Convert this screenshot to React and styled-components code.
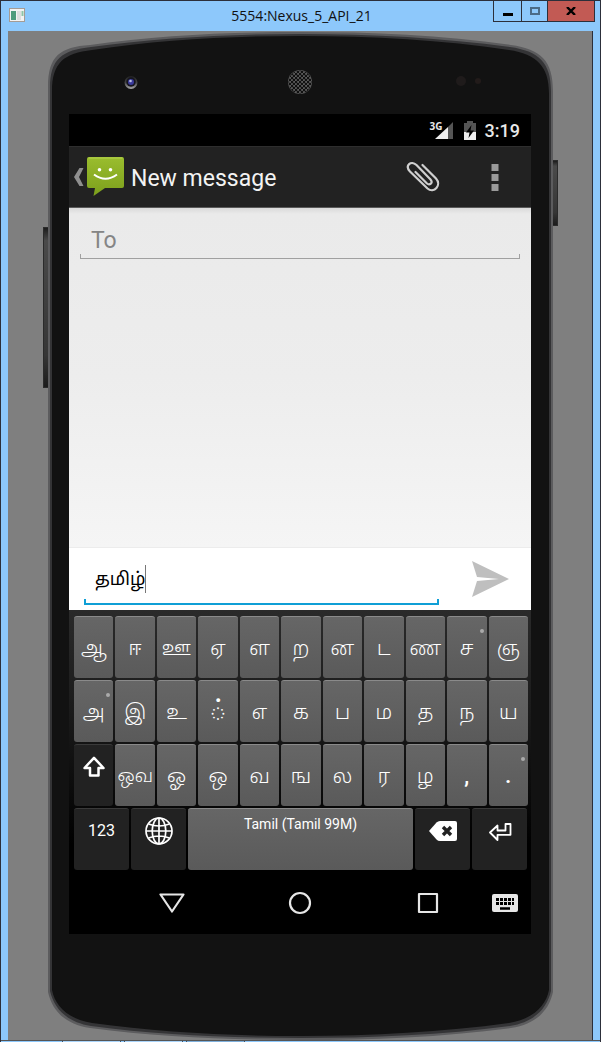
import React from 'react';
import styled, { createGlobalStyle, css } from 'styled-components';

const Global = createGlobalStyle`
  *, *::before, *::after { box-sizing: border-box; }
  html, body { margin: 0; padding: 0; background: #8dc8fb; }
  button { border: 0; padding: 0; margin: 0; background: none; color: inherit; font: inherit; }
  svg { display: block; }
`;

const ui = `Roboto, "Noto Sans", "Noto Sans Tamil", sans-serif`;

const Window = styled.div`
  background: #8dc8fb;
  border: 1px solid #2c2f3a;
  border-bottom: 0;
  font-family: ${ui};
`;

const TitleBar = styled.header`
  display: grid;
  grid-template-columns: 102px 1fr 102px;
  height: 30px;
  padding: 0 6px 0 8px;
`;

const AppIcon = styled.span`
  margin-top: 7px;
`;

const Title = styled.h1`
  margin: 0;
  text-align: center;
  font: 400 14px/30px "Open Sans", "Noto Sans", sans-serif;
  color: #111;
`;

const WindowButtons = styled.div`
  display: flex;
  justify-content: flex-end;
  margin-right: -1px;
  height: 21px;
`;

const WindowButton = styled.button`
  display: grid;
  place-items: center;
  width: ${(p) => (p.$close ? 47 : p.$first ? 29 : 26)}px;
  border: solid #2c2f3a;
  border-width: 0 1px 1px ${(p) => (p.$first ? 1 : 0)}px;
  background: ${(p) => (p.$close ? '#c25a54' : 'transparent')};
`;

const Desk = styled.main`
  margin: 0 7px;
  padding: 0 39px 0 40px;
  background: #7f7f7f;
  border-right: 1px solid #2c2f3a;
`;

const Phone = styled.section`
  position: relative;
  isolation: isolate;
  display: flex;
  flex-direction: column;
  padding: 0 22px 106px 21px;
`;

const Body = styled.svg`
  position: absolute;
  inset: 0;
  width: 100%;
  height: 100%;
  z-index: -1;
`;

const SideButton = styled.span`
  position: absolute;
  z-index: -2;
  top: ${(p) => p.$top}px;
  ${(p) => p.$side}: -5px;
  width: 8px;
  height: ${(p) => p.$height}px;
  background: linear-gradient(#1c1c1c, #4a4a4a 8%, #363636 80%, #1c1c1c);
  border: 1px solid #2b2b2b;
`;

const Bezel = styled.div`
  display: grid;
  grid-template-columns: 1fr 26px 1fr;
  align-items: center;
  height: 83px;
  padding: 19px 48px 0;

  & > :first-child { margin-left: 7px; }
`;

const Sensors = styled.span`
  justify-self: end;
`;

const Screen = styled.div`
  background: #000;
`;

const StatusBar = styled.div`
  display: flex;
  justify-content: flex-end;
  align-items: center;
  height: 32px;
  padding: 1px 11px 0;
  color: #e8e8e8;
  font-size: 18px;
  font-weight: 500;
`;

const Network = styled.span`
  display: flex;
  margin-right: 11px;
  height: 17px;
  font: 700 10px/8px "Open Sans", sans-serif;

  svg { margin-left: -8px; }
`;

const Battery = styled.span`
  margin-right: 9px;
`;

const ActionBar = styled.div`
  display: flex;
  align-items: center;
  height: 62px;
  padding: 0 32px 0 5px;
  background: #222;
  border-top: 1px solid #2e2e2e;
  border-bottom: 1px solid #5a5a5a;
  color: #f3f3f3;
`;

const Back = styled.button`
  display: flex;
  align-items: center;
  gap: 2px;
`;

const ScreenTitle = styled.h2`
  flex: 1;
  margin: 0 0 0 7px;
  padding-top: 3px;
  font-size: 23px;
  font-weight: 400;
  line-height: 30px;
`;

const BarButton = styled.button`
  margin-left: ${(p) => (p.$wide ? 50 : 0)}px;
`;

const Conversation = styled.div`
  height: 340px;
  padding: 14px 11px 0;
  background: linear-gradient(#dadada, #eaeaea 6px, #ededed 50%, #f5f5f5);
  border-bottom: 1px solid #ececec;
`;

const Underlined = styled.div`
  position: relative;
  display: flex;
  align-items: center;
  height: ${(p) => p.$height}px;
  padding: 2px 11px 0;
  border-bottom: ${(p) => p.$line}px solid ${(p) => p.$color};

  &::after {
    content: '';
    position: absolute;
    inset: auto 0 0;
    height: 4px;
    border: solid ${(p) => p.$color};
    border-width: 0 ${(p) => p.$line}px;
  }
`;

const plainInput = css`
  min-width: 0;
  padding: 0;
  border: 0;
  outline: 0;
  background: transparent;
  font-family: ${ui};
`;

const ToInput = styled.input`
  ${plainInput}
  flex: 1;
  font-size: 23px;
  line-height: 30px;
  &::placeholder { color: #858585; opacity: 1; }
`;

const Compose = styled.form`
  display: flex;
  align-items: center;
  height: 62px;
  padding: 0 22px 0 15px;
  background: #fff;
`;

const MessageField = styled.div`
  flex: 1;
  margin-right: 33px;
`;

const MessageInput = styled.input`
  ${plainInput}
  field-sizing: content;
  font-size: 18px;
  line-height: 30px;
  color: #000;
`;

const Caret = styled.span`
  width: 1px;
  height: 28px;
  background: #777;
`;

const Keyboard = styled.div`
  display: flex;
  flex-direction: column;
  gap: 2px;
  padding: 6px 3px 0 5px;
  background: linear-gradient(#2a2a2a, #1a1a1a 40%, #000 90%);
  color: #fff;
`;

const KeyRow = styled.div`
  display: grid;
  grid-template-columns: ${(p) => (p.$bottom ? '55px 55px 1fr 55px 55px' : 'repeat(11, 1fr)')};
  gap: 2px;
  padding-right: ${(p) => (p.$bottom ? 1 : 0)}px;
`;

const Key = styled.button`
  position: relative;
  display: flex;
  justify-content: center;
  align-items: ${(p) => (p.$raised ? 'flex-start' : 'center')};
  min-width: 0;
  height: 62px;
  padding-top: ${(p) => (p.$raised ? p.$raised : 0)}px;
  border-radius: 3px;
  border-top: 1px solid ${(p) => (p.$dark ? '#3a3a3a' : '#8a8a8a')};
  background: ${(p) => (p.$dark ? '#222' : 'linear-gradient(#666, #5a5a5a)')};
  font-size: ${(p) => (p.$size ? p.$size : 20)}px;
  line-height: 20px;
  font-weight: ${(p) => p.$weight || 300};
  white-space: nowrap;

  ${(p) => p.$more && css`
    &::after {
      content: '';
      position: absolute;
      top: 12px;
      right: 3px;
      width: 4px;
      height: 4px;
      border-radius: 2px;
      background: #aaa;
    }
  `}
`;

const NavBar = styled.nav`
  display: grid;
  grid-template-columns: 1fr 1fr 1fr 39px;
  place-items: center;
  height: 64px;
  padding: 2px 0 0 39px;

  & > :last-child { justify-self: start; }
`;

const Taskbar = styled.footer`
  display: flex;
  gap: 3px;
  height: 2px;
  padding-left: 61px;
  border-top: 1px solid #555;
`;

const Task = styled.span`
  width: 59px;
  background: ${(p) => (p.$active ? '#7fb0dc' : '#a9d4fa')};
  border: solid #3f5468;
  border-width: 0 1px;
`;

const rows = [
  ['ஆ', 'ஈ', 'ஊ', 'ஏ', 'ள', 'ற', 'ன', 'ட', 'ண', 'ச•', 'ஞ'],
  ['அ•', 'இ', 'உ', '்', 'எ', 'க', 'ப', 'ம', 'த', 'ந', 'ய'],
  ['shift', 'ஒவ', 'ஓ', 'ஒ', 'வ', 'ங', 'ல', 'ர', 'ழ', ',', '.•'],
];

const emphasis = {
  '்': { $size: 28, $weight: 400 },
  ',': { $weight: 700 },
  '.': { $weight: 700 },
  'ஒவ': { $size: 18 },
};

const PhoneBody = () => (
  <Body viewBox="0 0 504 1010" preserveAspectRatio="none" aria-hidden="true">
    <path d="M0 56C0 25 12 16 42 14C110 4 180 1 252 1S394 4 462 14C492 18 504 30 504 60V962C500 980 488 994 462 998C394 1007 324 1010 252 1010S110 1007 42 998C16 994 4 980 0 962Z" fill="#5c5c5e" />
    <path d="M2 57C2 28 14 19 43 16C110 7 180 3 252 3S394 7 461 16C490 20 502 32 502 60V961C498 978 486 992 461 996C394 1005 324 1008 252 1008S110 1005 43 996C18 992 6 978 2 961Z" fill="#343436" />
    <path d="M4 60C4 32 16 22 44 19C110 9 180 5 252 5S394 9 460 19C488 23 500 36 500 62V960C497 976 484 989 460 993C394 1002 324 1006 252 1006S110 1002 44 993C20 989 7 976 4 960Z" fill="#121212" />
  </Body>
);

const Speaker = () => (
  <svg width="26" height="26" viewBox="0 0 26 26" aria-hidden="true">
    <defs>
      <pattern id="mesh" width="4" height="4" patternUnits="userSpaceOnUse">
        <circle cx="1" cy="1" r="1.3" fill="#111" />
        <circle cx="3" cy="3" r="1.3" fill="#111" />
      </pattern>
    </defs>
    <circle cx="13" cy="13" r="12" fill="#5a5a5a" />
    <circle cx="13" cy="13" r="11.5" fill="url(#mesh)" />
  </svg>
);

const Camera = () => (
  <svg width="14" height="14" viewBox="0 0 14 14" aria-hidden="true">
    <defs>
      <linearGradient id="ring" x2="0" y2="1"><stop stopColor="#222" /><stop offset=".5" stopColor="#444" /><stop offset="1" stopColor="#aaa" /></linearGradient>
    </defs>
    <circle cx="7" cy="7.500" r="6.500" fill="url(#ring)" />
    <circle cx="7" cy="7" r="4.700" fill="#15151f" />
    <circle cx="7" cy="7" r="3" fill="#3a3a9c" />
    <circle cx="6.500" cy="6" r="1.300" fill="#b8bde0" />
  </svg>
);

const Messenger = () => (
  <svg width="38" height="40" viewBox="0 0 38 40" aria-hidden="true">
    <defs>
      <linearGradient id="bubble" x2="0" y2="1"><stop stopColor="#9abd2e" /><stop offset="1" stopColor="#7c9f1c" /></linearGradient>
    </defs>
    <path d="M3 0H36Q38 0 38 2V29Q38 31 36 31H19L7.500 39L9 31H3Q1 31 1 29V2Q1 0 3 0Z" fill="url(#bubble)" />
    <path d="M2.500 1H36.500" stroke="#b6d34f" />
    <circle cx="13.500" cy="12.700" r="1.800" fill="#fff" />
    <circle cx="24.500" cy="12.700" r="1.800" fill="#fff" />
    <path d="M8 17.500Q19.500 26 31 17.500" fill="none" stroke="#fff" strokeWidth="2" />
  </svg>
);

const Clip = () => (
  <svg width="36" height="34" viewBox="0 0 36 34" fill="none" stroke="#cfcfcf" strokeWidth="2.200" strokeLinecap="round" aria-hidden="true">
    <path d="M17.500 5L31 18.500C37 25 29 34 22.500 28.500L5 11.500C-.5 5.500 6 0 11.500 5L25.500 19.500C28.500 23 24.500 25.500 22 23.500L10.500 12" />
  </svg>
);

const Shift = () => (
  <svg width="24" height="22" viewBox="0 0 24 22" fill="none" stroke="#fff" strokeWidth="2.500" strokeLinejoin="round" aria-hidden="true">
    <path d="M12 1.800L21.500 12H16.500V19.500H8V12H2.500Z" />
  </svg>
);

const Globe = () => (
  <svg width="28" height="28" viewBox="0 0 28 28" fill="none" stroke="#fff" strokeWidth="1.700" aria-hidden="true">
    <circle cx="14" cy="14" r="13" />
    <ellipse cx="14" cy="14" rx="6.800" ry="13" />
    <path d="M14 1V27M1 14H27M3.500 7Q14 11 24.500 7M3.500 21Q14 17 24.500 21" />
  </svg>
);

const Backspace = () => (
  <svg width="28" height="20" viewBox="0 0 28 20" aria-hidden="true">
    <path d="M0 10L7.500 1.500Q9 0 11 0H26Q28 0 28 2V18Q28 20 26 20H11Q9 20 7.500 18.500Z" fill="#fff" />
    <path d="M14 6L22 14M22 6L14 14" stroke="#222" strokeWidth="3.400" />
  </svg>
);

const Enter = () => (
  <svg width="24" height="20" viewBox="0 0 24 20" fill="none" stroke="#fff" strokeWidth="1.800" strokeLinejoin="round" aria-hidden="true">
    <path d="M17.500 2H22.500V12.800H9.500V18L2 10.500L9.500 3.500V8.500H17.500Z" />
  </svg>
);

export default function App() {
  return (
    <>
      <Global />
      <Window>
        <TitleBar>
          <AppIcon>
            <svg width="16" height="14" viewBox="0 0 16 14" aria-hidden="true">
              <rect x=".5" y=".5" width="15" height="13" fill="#f3f3f3" stroke="#a59c94" />
              <rect x="2" y="3" width="5" height="9" fill="#4f9b7c" />
              <rect x="8" y="3" width="4" height="9" fill="#dedede" />
              <rect x="12.500" y="3" width="2" height="5" fill="#8fc5a8" />
            </svg>
          </AppIcon>
          <Title>5554:Nexus_5_API_21</Title>
          <WindowButtons>
            <WindowButton $first aria-label="Minimize">
              <svg width="10" height="10" aria-hidden="true"><path d="M0 8.500H10" stroke="#000" strokeWidth="3" /></svg>
            </WindowButton>
            <WindowButton aria-label="Maximize">
              <svg width="10" height="8" aria-hidden="true"><rect x="1" y="1" width="8" height="6" fill="none" stroke="#4b6b87" strokeWidth="2" /></svg>
            </WindowButton>
            <WindowButton $close aria-label="Close">
              <svg width="10" height="8" aria-hidden="true"><path d="M1 0L9 8M9 0L1 8" stroke="#000" strokeWidth="2.400" /></svg>
            </WindowButton>
          </WindowButtons>
        </TitleBar>

        <Desk>
          <Phone>
            <PhoneBody />
            <SideButton $side="left" $top={196} $height={161} />
            <SideButton $side="right" $top={129} $height={66} />
            <Bezel>
              <Camera />
              <Speaker />
              <Sensors>
                <svg width="28" height="12" aria-hidden="true">
                  <circle cx="6" cy="5" r="5" fill="#1f1b1b" />
                  <circle cx="23" cy="5" r="3" fill="#221b1a" />
                </svg>
              </Sensors>
            </Bezel>

            <Screen>
              <StatusBar>
                <Network>
                  3G
                  <svg width="18" height="17" viewBox="0 0 18 17" aria-hidden="true">
                    <path d="M18 0V17H13V5Z" fill="#555" />
                    <path d="M13 5V17H0Z" fill="#eee" />
                  </svg>
                </Network>
                <Battery>
                  <svg width="12" height="19" viewBox="0 0 12 19" aria-hidden="true">
                    <path d="M3 0H9V2H12V19H0V2H3Z" fill="#555" />
                    <path d="M0 11H12V19H0Z" fill="#eee" />
                    <path d="M7.500 4L2 11.500H5.500L4.500 17L10 9.500H6.500Z" fill="#000" />
                  </svg>
                </Battery>
                <time>3:19</time>
              </StatusBar>

              <ActionBar>
                <Back aria-label="Back">
                  <svg width="10" height="20" viewBox="0 0 10 20" aria-hidden="true">
                    <path d="M5.500 1H9.500L5 10L9.500 19H5.500L0 10Z" fill="#8f8f8f" />
                  </svg>
                  <Messenger />
                </Back>
                <ScreenTitle>New message</ScreenTitle>
                <BarButton aria-label="Attach"><Clip /></BarButton>
                <BarButton $wide aria-label="More options">
                  <svg width="8" height="27" aria-hidden="true">
                    <path d="M4 0V27" stroke="#9a9a9a" strokeWidth="7" strokeDasharray="7 3" />
                  </svg>
                </BarButton>
              </ActionBar>

              <Conversation>
                <Underlined $height={37} $line={1} $color="#a0a0a0">
                  <ToInput aria-label="To" placeholder="To" />
                </Underlined>
              </Conversation>

              <Compose onSubmit={(e) => e.preventDefault()}>
                <MessageField>
                  <Underlined $height={52} $line={2} $color="#0f9fd6">
                    <MessageInput aria-label="Message" defaultValue="தமிழ்" />
                    <Caret />
                  </Underlined>
                </MessageField>
                <button aria-label="Send">
                  <svg width="37" height="36" viewBox="0 0 37 36" aria-hidden="true">
                    <path d="M0 0L37 18L0 36L5 20L27 18L5 16Z" fill="#bfbfbf" />
                  </svg>
                </button>
              </Compose>

              <Keyboard>
                {rows.map((row) => (
                  <KeyRow key={row[0]}>
                    {row.map((k) => {
                      const label = k.replace('•', '');
                      return k === 'shift' ? (
                        <Key key={k} $dark $raised={11} aria-label="Shift"><Shift /></Key>
                      ) : (
                        <Key key={k} $more={k !== label} {...emphasis[label]}>{label}</Key>
                      );
                    })}
                  </KeyRow>
                ))}
                <KeyRow $bottom>
                  <Key $dark $raised={12} $size={16} $weight={400}>123</Key>
                  <Key $dark $raised={8} aria-label="Switch language"><Globe /></Key>
                  <Key $raised={5} $size={14} $weight={400}>Tamil (Tamil 99M)</Key>
                  <Key $dark $raised={12} aria-label="Delete"><Backspace /></Key>
                  <Key $dark $raised={13} aria-label="Enter"><Enter /></Key>
                </KeyRow>
              </Keyboard>

              <NavBar>
                <button aria-label="Back">
                  <svg width="26" height="20" viewBox="0 0 26 20" fill="none" stroke="#e6e6e6" strokeWidth="2.200" strokeLinejoin="round" aria-hidden="true"><path d="M1.500 1.500H24.500L13 18.500Z" /></svg>
                </button>
                <button aria-label="Home">
                  <svg width="24" height="24" fill="none" stroke="#e6e6e6" strokeWidth="2.200" aria-hidden="true"><circle cx="12" cy="12" r="10" /></svg>
                </button>
                <button aria-label="Overview">
                  <svg width="22" height="22" fill="none" stroke="#e6e6e6" strokeWidth="2.200" strokeLinejoin="round" aria-hidden="true"><rect x="2" y="2" width="18" height="18" /></svg>
                </button>
                <button aria-label="Choose keyboard">
                  <svg width="26" height="18" viewBox="0 0 26 18" aria-hidden="true">
                    <rect width="26" height="18" rx="2" fill="#e6e6e6" />
                    <path d="M4 5.500H22M4 9.500H22" stroke="#000" strokeWidth="3" strokeDasharray="3 1" />
                    <path d="M8 14.500H18" stroke="#000" strokeWidth="2.500" />
                  </svg>
                </button>
              </NavBar>
            </Screen>
          </Phone>
        </Desk>
        <Taskbar>
          <Task />
          <Task />
          <Task $active />
        </Taskbar>
      </Window>
    </>
  );
}
